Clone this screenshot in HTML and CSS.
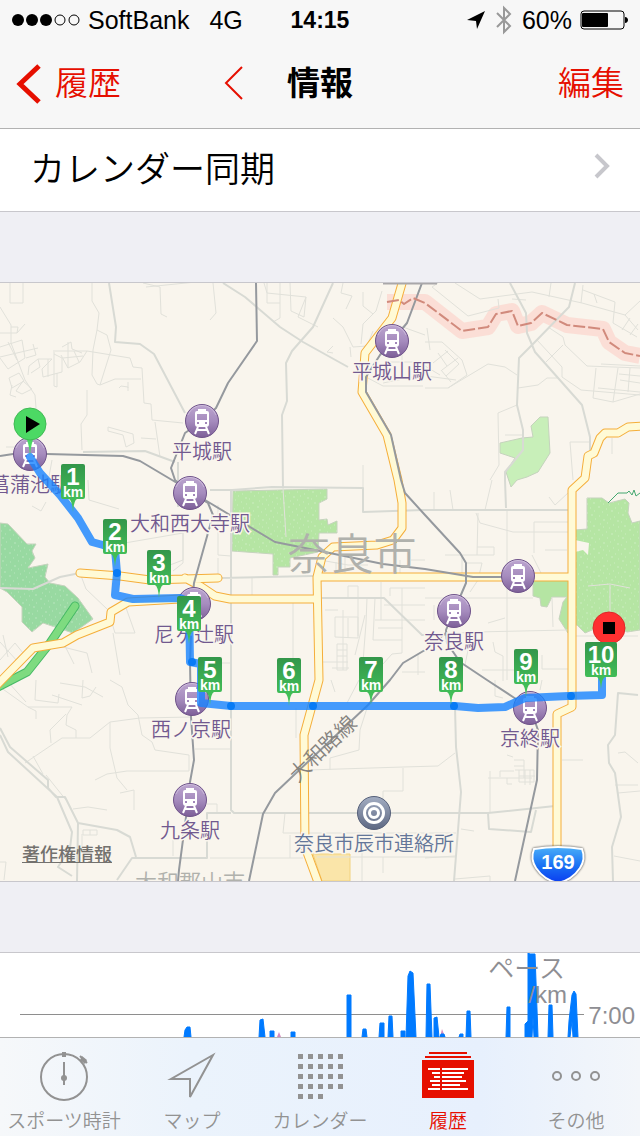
FILE: index.html
```html
<!DOCTYPE html>
<html lang="ja">

<head>
  <meta charset="UTF-8">
  <meta name="viewport" content="width=device-width, initial-scale=1.0">
  <title>情報</title>
  <link rel="stylesheet" href="styles.css">
</head>

<body>
  <header class="header">
    <div class="status-bar">
      <div class="status-left">
        <svg class="signal" width="68" height="12" viewBox="0 0 68 12" aria-hidden="true">
          <circle cx="6" cy="6" r="6" />
          <circle cx="20" cy="6" r="6" />
          <circle cx="34" cy="6" r="6" />
          <circle class="off" cx="48" cy="6" r="5" />
          <circle class="off" cx="62" cy="6" r="5" />
        </svg>
        <span class="carrier">SoftBank</span>
        <span class="network">4G</span>
      </div>
      <div class="clock">14:15</div>
      <div class="status-right">
        <svg width="20" height="20" viewBox="0 0 20 20" aria-hidden="true">
          <path d="M19 1 1 10l9 1 1 8z" />
        </svg>
        <svg class="bluetooth" width="16" height="26" viewBox="0 0 16 26" aria-hidden="true">
          <path d="M1 6l13 13-6 6V1l6 6L1 20" />
        </svg>
        <span class="percent">60%</span>
        <svg width="48" height="20" viewBox="0 0 48 20" aria-hidden="true">
          <rect class="battery-shell" x="1" y="1" width="43" height="18" rx="3" />
          <rect x="2" y="3" width="26" height="14" rx="1" />
          <path d="M45 7c4 0 4 6 0 6z" />
        </svg>
      </div>
    </div>
    <nav class="nav-bar">
      <div class="nav-left">
        <a class="back" href="#history">
          <svg width="26" height="40" viewBox="0 0 26 40" aria-hidden="true">
            <path d="M23 2 4 20l19 18" stroke-width="5" />
          </svg>
          履歴
        </a>
        <button class="previous" type="button" aria-label="前へ">
          <svg width="20" height="36" viewBox="0 0 20 36" aria-hidden="true">
            <path d="M18 1 2 17l16 16" stroke-width="2" />
          </svg>
        </button>
      </div>
      <h1>情報</h1>
      <button class="edit" type="button">編集</button>
    </nav>
  </header>

  <main class="content">
    <a class="row" href="#calendar-sync">
      カレンダー同期
      <svg width="18" height="26" viewBox="0 0 18 26" aria-hidden="true">
        <path d="M2 2l11 11L2 24" />
      </svg>
    </a>

    <section class="map">
      <svg class="map-canvas" viewBox="0 283 640 598" role="img" aria-label="マップ">
        <defs>
          <linearGradient id="station-fill" x1="0" y1="0" x2="0" y2="1">
            <stop offset="0" stop-color="#bca5cf" />
            <stop offset="0.5" stop-color="#a68cbe" />
            <stop offset="1" stop-color="#7d5f98" />
          </linearGradient>
          <linearGradient id="office-fill" x1="0" y1="0" x2="0" y2="1">
            <stop offset="0" stop-color="#a3adc2" />
            <stop offset="1" stop-color="#5d6883" />
          </linearGradient>
          <linearGradient id="km-fill" x1="0" y1="0" x2="0" y2="1">
            <stop offset="0" stop-color="#33964a" />
            <stop offset="1" stop-color="#46ca5c" />
          </linearGradient>
          <linearGradient id="shield-fill" x1="0" y1="0" x2="0" y2="1">
            <stop offset="0" stop-color="#4aaef8" />
            <stop offset="0.5" stop-color="#1b73f4" />
            <stop offset="1" stop-color="#0a3cf0" />
          </linearGradient>
          <pattern id="grass" width="31" height="23" patternUnits="userSpaceOnUse">
            <path d="M1 2h1M9 1h2M17 3h1M26 2h1M5 5h1M13 6h1M22 5h2M29 7h1M2 9h2M10 10h1M18 9h1M25 11h1M6 13h1M14 14h2M21 13h1M28 15h2M1 16h1M11 18h1M18 17h1M24 19h1M4 20h2M14 21h1M20 22h1M29 21h1" stroke="#fff" stroke-opacity="0.3" />
          </pattern>
          <symbol id="station" viewBox="-18 -18 36 36">
            <circle r="16.500" fill="url(#station-fill)" stroke="#6f538a" />
            <path d="M-14 -6a15 15 0 0 1 28 0" fill="none" stroke="#fff" stroke-opacity="0.3" />
            <path fill="#fff" fill-rule="evenodd"
              d="M-4 -12h8v2h1q2 0 2 2v11q0 3-3 3h-8q-3 0-3-3v-11q0-2 2-2h1zM-5 -7v6H5v-6zM-5 1v2h2v-2zM3 1v2h2v-2z" />
            <path d="M-4 6l-3 7M4 6l3 7M-5 9H5" stroke="#fff" stroke-width="2" />
          </symbol>
          <symbol id="km" viewBox="0 0 24 48">
            <path d="M2 0h20q2 0 2 2v31q0 2-2 2h-6q-3 1-4 13q-1-12-4-13H2q-2 0-2-2V2q0-2 2-2z" fill="url(#km-fill)" />
          </symbol>
        </defs>

        <rect class="land" y="283" width="640" height="598" />

        <g class="parks">
          <path class="forest" d="M0 523l8 1 19 20h9l-4 7 3 7-7 10 20-4-3 13 5 6 15 3 13 12 15 21-20 14-30-10-11 9-10-10v-15L7 592l-7-4z" />
          <path class="park" d="M233 491l94-2v10l-8 4v17l8-1 1 6 9-4v12h-18l-1 19-28 6v9h-12v8h-5v-21l-41-3z" />
          <path class="lawn" d="M540 417h8l2 36-12 19-11 5-10 3-6 7-5-15 9-14-15-5v-10l22-5 11-1-2-11z" />
          <path class="park" d="M587 498h15l7 5 16-4 4 4-1 10 4 10 8-2v109l-13 2-12-6-23 4-7 3-8-8h-5v-96l3 1 12-1z" />
          <path class="park" d="M533 580l37-2-2 55-9-14 4-17 4-5h-15l-5 10-6-1-1-8-7-2z" />
          <path class="grass" d="M0 523l8 1 19 20h9l-4 7 3 7-7 10 20-4-3 13 5 6 15 3 13 12 15 21-20 14-30-10-11 9-10-10v-15L7 592l-7-4zM233 491l94-2v10l-8 4v17l8-1 1 6 9-4v12h-18l-1 19-28 6v9h-12v8h-5v-21l-41-3zM587 498h15l7 5 16-4 4 4-1 10 4 10 8-2v109l-13 2-12-6-23 4-7 3-8-8h-5v-96l3 1 12-1z" />
          <path class="clearing" d="M575 540l14 3-1 12-5-5-8 2z" />
          <path class="plot" d="M313 854h37v27h-28z" />
          <path class="trail" d="M608 503l10-10h9l2-2 3 4 2-5 2 6 4-3" />
        </g>

        <path class="border-band" d="M387 302h38l37 29 26-4 8-13 16-3 6 15 13-3 11-10 25 12 36 4 6 13 16 11 15 3" />

        <path class="streets" d="M92 283v18l7 12-2 17 10 5 4 15-11 35-3-1-5-9 1-25 4-20M55 351h32l43 7 3 9 9 1 2 35 7 1 1 16 31 3M100 385l15-6h26M87 390v25l-6 9 1 26M10 283v20h13v-20M0 307l11 18v18l14 37 10 15 1 13M0 347l22-7 3 18-17 11-8-11M0 357l38-9M11 327h7l-1 6H0M17 333l8-9M8 342l9 18M33 344l3 11-10 3M28 375l1-9 9-7h14M31 373l9-6-2-8M54 350v36l3 1v-14M62 358v14l-19 5-1-8 10-10M48 359v18M54 354l8 4M61 355l7 13 12-6 7-11M68 342v26M62 347l9-5 1 7 10 4M63 358l20-2M74 351l5 11M9 378l10-5 5 8-12 7zM12 385l-2 10 6 2M16 391l7-10 9 8-10 5zM108 427l25 7 1 9-8 4-3-12-15-4zM119 388l2-2 7 1v4M128 382v6M141 438l15 1M155 422l5 35M6 447h15M52 460l-4 22" />
        <path class="streets" d="M143 283l17 4 1 27 6 3M146 287l50-5M213 283l3 30-6 7M264 283l3 10 39 4-2 20-13-6-1-28M267 283v20h13v-20M280 303v15l-7 4M306 297l-8 20 20 10M333 318l10 9 10 20 14-1 6-15M333 353l-6-1 6-6M343 283l-2 10 11 3-6 13M363 292v14l10 8M382 291l-6 20-13 13-2 20M350 347l1 10M366 377l17 9h40M383 383l40-8M402 355v20M389 362h36M400 326l25 9M363 465v23" />
        <path class="streets" d="M432 287l36 29 31-8-1-9M432 287l6-4M455 283l25 16 52-7 50 11 43 12 13 15M526 300l-14-1M551 283l-2 14M583 285l-2 18M583 290l32 12-2 21 24 14M597 303l-3-9M625 315l15-14M622 330l8-12M630 335l8-11M448 388l40-24 17 3 12 8M425 342h17l20 18 5 15-19 13h-23M427 328l3 22M433 363l15-12M442 370l16-12M446 376l13-12M438 353l9 13M445 350l14 14M441 370l10 12M426 376l30 4M425 366l15 9M518 388l20-3 9-7h10M537 340l25 27v10l19 13 59 5M548 327l15 10 2 8 22 21 53 2M546 362l17-17M596 368l-3 30 20 4 27-8M618 368l-5 34M601 364l39 2M619 374l21 2M620 380l20 3M598 388l42 4M630 368l-2 24M498 413l19-8M498 413l1 52-9 15M505 435h17M570 442h20M570 442l3 38M612 438v16" />
        <path class="streets" d="M67 480l8 4-4 9M88 480l1 20 30 9M46 502l-5 9-9-5M113 545l70-12V560l-13 5M183 533v30l-10 8M80 573l6 16 21 20M112 570v25M125 605l10 28h-20l-3-10M113 633l7 42M135 600l-12 5M0 642l18 20M0 660l15-17 8 10M3 635l5 22M47 643l40 10 5 20M64 644l10 20" />
        <path class="streets" d="M283 488l3 49M252 577v21M293 598v82M348 586h10v50M348 586v12M335 617h23v21l-23-1zM348 618v20M343 610v60M325 610h13M337 644h10v26h-10zM337 650h10M337 656h10M322 662h26M332 668h17M367 598l-1 25-4 52M375 598l-2 42h29M402 588v65l-10 1-9 10M375 620h50M381 582v38M390 588v8M390 588h35M384 605h41M378 628h25M320 560l28 5h20M400 560v15M336 562v12M345 555v20M411 560h14M418 655v20M402 672h23M355 655l10-40M218 505v50l13 1M218 558v20M210 663h21" />
        <path class="streets" d="M478 513l-1 42M480 523l33 9h55M480 523l-4-10M507 510v170M534 553v-31h34M445 555h49v-8h-17M492 480l-7 30M450 490l3 20M434 492v18M549 497l6 8 13-12M425 598h108M425 635l50-3 93-2M552 597l1 30M488 623l17-5M434 605v15M462 555v21M467 563h15l-4 17-8 12M532 555l12 24M470 640l-5 25M493 642l2 10 8 4v25M542 655v14h26M482 670h34M575 636h63M610 585v35M588 586l22-2 20 4M545 550h22" />
        <path class="streets" d="M25 763l37-25h28l20-16 30-4 52-1M110 722v26l7 30 10 12M95 780l12-6 20-3h62v-16l-34-5-3-8-10-7-4-20-10-10-6-18-12-7M0 687l28 20h44l-5 8-1 10 10 5v8M66 714l-16 16 1 13M36 680l-1 20 23 3 1-9M28 707l8 4v8M52 695l30 10M8 682l18 20M60 683l25 4 18 10M83 680l-1 18 8-2 6-9M73 809l15-2 19 3M120 793l14-3v20M83 830h14v5H83zM90 830v5M82 850v-16M0 862h6l-2 18M195 749h36M173 840v16M66 800l-20-25M33 756l10 18" />
        <path class="streets" d="M308 770l95-3 35-1 17-13M403 768v23h-20v22M368 705l-8 25-1 20-29 8v12M285 813l-2 20h173M290 835v23M210 858h93M317 857h138M362 837v44M383 857v16M296 708v30M331 680l4 12M359 680l-12 23M207 804h10v10M490 771v42M488 778h44M514 760h10v18M514 766h10M519 770v12h15v-12h-19M525 770v15M530 770v15M519 776h16M507 778v6h5M500 777v-6h14M507 755l6 2M562 760h21M618 753l7-1 13 11M618 793l22-2M615 785h23M461 829l13 2M425 858l30-2M455 879l35-3v5M614 856l26 5M542 680l-2 10M495 680v16l8 2" />

        <path class="roads" d="M109 283l7 44-1 15 25 2 14 10 31 59M83 452l62-1 30 11M178 462v45M223 283l22 14 35 30 23 15 45 25M333 283l-20 44-21 24-6 12 1 38-5 14 1 73M510 283l16 30 1 20 8 19 47 53 8 32v13M575 283l-6 24-37 38-13 13-2 47 6 25v20l-18 22v8l1 28M210 490h22l40-3 91 1v24l60-2h145M231 490v320l3 3h254l67-7M231 813h-24v45h-75l-15 22M220 578l93-2M322 598h62l38 37h27" />
        <path class="roads" d="M0 588l33 1 27-12 20-4" />
        <path class="roads" d="M0 728l10 19 38 33v8l8 9h9l13 26-1 58M0 735l8 17 49 45 15 35-2 16-12 19 14 9M78 823l39 7 13 7 6 20M455 707l1 40 5 45-7 89M638 695l-20-2-3 42-7 10 1 18 6 10 6 44-9 30 1 34M488 813l1 16 42 3 5-22" />

        <g class="highways">
          <path class="green-casing" d="M75 606l-25 37-23 29-31 16" />
          <path class="green-fill" d="M75 606l-25 37-23 29-31 16" />
          <path class="casing" d="M403 280l-11 38-27 35-3 39 25 43 11 45 4 23v25l-9 12-16 5-44 2-11 10-5 20 2 103-15 55 1 112 14 38M317 577h253M644 426l-16 1-10 6h-13l-5 5-6 15-6 3-3 22-13 12v217l-15 7v137M80 573l40 3 30 4 68-2M185 578l15 8 15 10 15 3h87M180 599l-52 3-17 10-1 10-33 13-14 8-30 5-37 38" />
          <path class="fill" d="M403 280l-11 38-27 35-3 39 25 43 11 45 4 23v25l-9 12-16 5-44 2-11 10-5 20 2 103-15 55 1 112 14 38M317 577h253M644 426l-16 1-10 6h-13l-5 5-6 15-6 3-3 22-13 12v217l-15 7v137M80 573l40 3 30 4 68-2M185 578l15 8 15 10 15 3h87M180 599l-52 3-17 10-1 10-33 13-14 8-30 5-37 38" />
        </g>

        <path class="rails" d="M0 456l13-2 34 0 76 2 17 5 32 19 38 23 20 12 45 27 45 9 63 13 42 5 48 8h29M256 283l1 58-29 42-12 25-14 13-17 12-14 35 4 12 15 13 18 10 5 12-19 68-2 21-2 59 1 54 3 43-4 22-2 18-2 17-7 53-1 11M422 283l-15 40-27 32-14 22v15l25 43 10 45 4 13 20 22 35 38 6 10v20l-6 14-6 13-8 20 1 13 13 19 27 18 26 17 17 11 8 22-1 50-22 101" />
        <path class="rails" d="M447 632l-22 18-22 13-13 17-22 25-93 88-12 21-14 67" />
        <path class="border-line" d="M387 302l12-2 5 4 9-6 12 5 37 28 26-4 8-13 16-3 6 15 13-3 11-10 25 12 36 4 6 13 16 11 15 3" />
        <path class="clipped-label" d="M383 283h54" />

        <g class="city-labels">
          <text class="city" x="352" y="570">奈良市</text>
          <text class="town" x="190" y="890">大和郡山市</text>
          <text class="line-name" transform="rotate(-44 323 749)" x="323" y="756">大和路線</text>
        </g>

        <g class="stations">
          <use href="#station" x="374" y="323" width="36" height="36" />
          <use href="#station" x="184" y="403" width="36" height="36" />
          <use href="#station" x="12" y="436" width="36" height="36" />
          <use href="#station" x="172" y="475" width="36" height="36" />
          <use href="#station" x="176" y="586" width="36" height="36" />
          <use href="#station" x="500" y="558" width="36" height="36" />
          <use href="#station" x="436" y="593" width="36" height="36" />
          <use href="#station" x="174" y="681" width="36" height="36" />
          <use href="#station" x="512" y="690" width="36" height="36" />
          <use href="#station" x="172" y="782" width="36" height="36" />
          <text x="392" y="379">平城山駅</text>
          <text x="202" y="459">平城駅</text>
          <text x="30" y="492">菖蒲池駅</text>
          <text x="190" y="531">大和西大寺駅</text>
          <text x="194" y="642">尼ヶ辻駅</text>
          <text x="454" y="649">奈良駅</text>
          <text x="191" y="737">西ノ京駅</text>
          <text x="530" y="746">京終駅</text>
          <text x="190" y="838">九条駅</text>
        </g>

        <g class="office">
          <circle cx="374" cy="813" r="16.500" fill="url(#office-fill)" stroke="#566079" />
          <circle class="ring" cx="374" cy="813" r="9.500" />
          <circle class="ring" cx="374" cy="813" r="4.500" />
          <text x="374" y="851">奈良市辰市連絡所</text>
        </g>

        <g class="route-sign">
          <path d="M534 849q24-4 48 0 4 10-2 19-8 12-22 15-14-3-22-15-6-9-2-19z" fill="url(#shield-fill)" />
          <text x="558" y="869">169</text>
        </g>

        <path class="route" d="M30 457l10 16 20 22 18 23 14 24 11 3 12 4 2 24-2 22 18 4 47-1 9 4 1 60 11 2v39l30 3h224l23 2 27-1 20-9 43-2 34-1v-20" />
        <g class="route-points">
          <circle cx="117" cy="573" r="4" />
          <circle cx="192" cy="662" r="4" />
          <circle cx="231" cy="706" r="4" />
          <circle cx="313" cy="706" r="4" />
          <circle cx="454" cy="706" r="4" />
          <circle cx="571" cy="696" r="4" />
        </g>

        <g class="start">
          <path d="M25 436q4 6 5 20 1-14 5-20z" />
          <circle cx="30" cy="424" r="16" />
          <path class="symbol" d="M26 416l14 8-14 9z" />
        </g>
        <g class="finish">
          <circle cx="609" cy="628" r="16" />
          <path class="symbol" d="M603 622h12v12h-12z" />
        </g>

        <g class="km-markers">
          <use href="#km" x="61" y="464" width="24" height="48" />
          <text class="number" x="73" y="485">1</text>
          <text x="73" y="497">km</text>
          <use href="#km" x="103" y="519" width="24" height="48" />
          <text class="number" x="115" y="540">2</text>
          <text x="115" y="552">km</text>
          <use href="#km" x="147" y="550" width="24" height="48" />
          <text class="number" x="159" y="571">3</text>
          <text x="159" y="583">km</text>
          <use href="#km" x="177" y="596" width="24" height="48" />
          <text class="number" x="189" y="617">4</text>
          <text x="189" y="629">km</text>
          <use href="#km" x="198" y="657" width="24" height="48" />
          <text class="number" x="210" y="678">5</text>
          <text x="210" y="690">km</text>
          <use href="#km" x="277" y="658" width="24" height="48" />
          <text class="number" x="289" y="679">6</text>
          <text x="289" y="691">km</text>
          <use href="#km" x="359" y="657" width="24" height="48" />
          <text class="number" x="371" y="678">7</text>
          <text x="371" y="690">km</text>
          <use href="#km" x="439" y="657" width="24" height="48" />
          <text class="number" x="451" y="678">8</text>
          <text x="451" y="690">km</text>
          <use href="#km" x="514" y="649" width="24" height="48" />
          <text class="number" x="526" y="670">9</text>
          <text x="526" y="682">km</text>
          <path d="M587 642h28q2 0 2 2v31q0 2-2 2h-10q-3 1-4 12q-1-11-4-12h-10q-2 0-2-2v-31q0-2 2-2z" fill="url(#km-fill)" />
          <text class="number" x="601" y="663">10</text>
          <text x="601" y="675">km</text>
        </g>
      </svg>
      <a class="legal" href="#legal">著作権情報</a>
    </section>

    <section class="chart">
      <svg class="chart-canvas" viewBox="0 0 640 84" role="img" aria-label="ペース /km">
        <path class="axis" d="M20 61.500h564" />
        <path class="accent" d="M277 84l2-5 2 5zM440 84l2-8 3 8z" />
        <path class="bars" d="M184 84l1-7 2-3h3l1 10zM259 84l1-17 3-1 2 18zM270 84v-6h4v6zM291 84v-5h4v5zM347 84V42h4v42zM362 84l1-8h3l1 8zM379 84l1-14h4v14zM388 84l1-21h3l1 21zM401 84v-6h4v6zM406 84l2-61 2-5 3 2 3 64zM426 84l1-53h3l2 53zM434 84V65l3-1 2 20zM440 84l1-3h3l1 3zM459 84l1-3h3v3zM466 84l1-26h3l1 26zM506 84l1-30h3v30zM525 84v-13l3-3V0l2 1h5l3 83h-4l-1-20-1 20zM548 84l1-32h3l1 32zM568 84l1-16 3-26 2-4 2 3 2 43h-5l-1-16-2 16z" />
        <text class="chart-title" x="565" y="25">ペース</text>
        <text class="chart-unit" x="567" y="50">/km</text>
        <text class="chart-tick" x="635" y="71">7:00</text>
      </svg>
    </section>
  </main>

  <nav class="tab-bar">
    <a class="tab" href="#stopwatch">
      <svg width="56" height="48" viewBox="0 0 56 48" aria-hidden="true">
        <circle class="line" cx="28" cy="25" r="23" />
        <path class="line" d="M28 10v23M44 4l7 7" />
        <path d="M26 0h4v5h-4zM46 4l5 4-2 4-5-4z" />
        <circle cx="28" cy="26" r="3" />
      </svg>
      スポーツ時計
    </a>
    <a class="tab" href="#map">
      <svg width="56" height="48" viewBox="0 0 56 48" aria-hidden="true">
        <path class="line" d="M49 3 7 27h19v18z" />
      </svg>
      マップ
    </a>
    <a class="tab" href="#calendar">
      <svg width="56" height="48" viewBox="0 0 56 48" aria-hidden="true">
        <path d="M6 2h5v5H6zM16 2h5v5h-5zM26 2h5v5h-5zM36 2h5v5h-5zM46 2h5v5h-5zM6 12h5v5H6zM16 12h5v5h-5zM26 12h5v5h-5zM36 12h5v5h-5zM46 12h5v5h-5zM6 22h5v5H6zM16 22h5v5h-5zM26 22h5v5h-5zM36 22h5v5h-5zM46 22h5v5h-5zM6 32h5v5H6zM16 32h5v5h-5zM26 32h5v5h-5zM36 32h5v5h-5zM46 32h5v5h-5zM6 42h5v5H6zM16 42h5v5h-5zM26 42h5v5h-5z" />
      </svg>
      カレンダー
    </a>
    <a class="tab active" href="#history" aria-current="page">
      <svg width="56" height="48" viewBox="0 0 56 48" aria-hidden="true">
        <path d="M9 0h38v2H9zM5 4h46v2H5zM2 8h52v38H2z" />
        <path class="cutout" d="M8 17h12M22 17h26M12 21h8M22 21h22M14 25h6M22 25h20M10 29h10M22 29h24M12 33h8M22 33h18M8 37h12M22 37h26" />
      </svg>
      履歴
    </a>
    <a class="tab" href="#more">
      <svg width="56" height="48" viewBox="0 0 56 48" aria-hidden="true">
        <circle class="line" cx="9" cy="24" r="4" />
        <circle class="line" cx="28" cy="24" r="4" />
        <circle class="line" cx="47" cy="24" r="4" />
      </svg>
      その他
    </a>
  </nav>
</body>

</html>
```

FILE: styles.css
```css
* {
  margin: 0;
  padding: 0;
  box-sizing: border-box;
}

body {
  display: flex;
  flex-direction: column;
  height: 100vh;
  overflow: hidden;
  font-family: "Liberation Sans", "Noto Sans CJK JP", sans-serif;
  font-weight: 350;
  background-color: #efeff4;
  color: #000;
}

a {
  color: inherit;
  text-decoration: none;
}

button {
  border: none;
  background: none;
  color: inherit;
  font: inherit;
  cursor: pointer;
}

svg {
  display: block;
  flex-shrink: 0;
  overflow: visible;
}

.header {
  background-color: #f7f7f7;
  border-bottom: 1px solid #b2b2b2;
}

/* Status bar */
.status-bar {
  display: grid;
  grid-template-columns: 1fr auto 1fr;
  align-items: center;
  height: 40px;
  padding: 0 12px;
  font-size: 25px;
}

.status-left,
.status-right {
  display: flex;
  align-items: center;
  gap: 8px;
}

.status-right {
  justify-content: flex-end;
}

.network {
  margin-left: 12px;
}

.signal .off {
  fill: none;
  stroke: #000;
}

.clock {
  font-size: 23px;
  font-weight: 700;
}

.bluetooth {
  fill: none;
  stroke: #999;
  stroke-width: 2;
  margin: 0 2px;
}

.battery-shell {
  fill: none;
  stroke: #000;
}

/* Navigation */
.nav-bar {
  display: grid;
  grid-template-columns: 1fr auto 1fr;
  align-items: center;
  height: 88px;
  padding: 0 16px;
  font-size: 33px;
  line-height: 44px;
  color: #e60f00;
}

.nav-bar path {
  fill: none;
  stroke: #e60f00;
}

.nav-left,
.back {
  display: flex;
  align-items: center;
}

.nav-left {
  justify-content: space-between;
  padding-right: 43px;
}

.back {
  gap: 13px;
}

.nav-bar h1 {
  font-size: 33px;
  font-weight: 700;
  color: #000;
}

.edit {
  justify-self: end;
}

/* Content */
.content {
  flex: 1;
  min-height: 0;
  overflow: hidden;
}

.row {
  display: flex;
  align-items: center;
  justify-content: space-between;
  height: 83px;
  padding: 0 28px 8px 30px;
  border-bottom: 1px solid #c8c7cc;
  background-color: #fff;
  font-size: 35px;
}

.row path {
  fill: none;
  stroke: #c7c7cc;
  stroke-width: 4;
}

.map {
  position: relative;
  margin: 70px 0;
  border-top: 1px solid #c8c7cc;
  border-bottom: 1px solid #c8c7cc;
}

.map-canvas,
.chart-canvas {
  width: 100%;
  overflow: hidden;
}

.legal {
  position: absolute;
  left: 22px;
  bottom: 14px;
  font-size: 18px;
  line-height: 24px;
  font-weight: 500;
  color: #73716e;
  text-decoration: underline;
}

/* Map layers */
.land,
.clearing {
  fill: #f9f5ed;
}

.forest {
  fill: #98d9a1;
}

.park {
  fill: #b5e5a3;
}

.lawn {
  fill: #c8efb9;
}

.forest,
.park,
.lawn {
  stroke: #c5d3bd;
}

.grass {
  fill: url(#grass);
}

.plot {
  fill: #fae5a9;
  stroke: #f2d27e;
}

.trail {
  fill: none;
  stroke: #45a870;
}

.streets,
.roads,
.rails,
.route,
.casing,
.fill,
.green-casing,
.green-fill,
.border-band,
.border-line {
  fill: none;
  stroke-linejoin: round;
}

.streets {
  stroke: #e1e1da;
}

.roads {
  stroke: #d8dad4;
  stroke-width: 2;
}

.rails {
  stroke: #95999e;
  stroke-width: 2;
}

.casing,
.fill,
.green-casing,
.green-fill {
  stroke-linecap: round;
}

.casing {
  stroke: #f5ae3a;
  stroke-width: 9;
}

.fill {
  stroke: #fffad6;
  stroke-width: 7;
}

.green-casing {
  stroke: #46b965;
  stroke-width: 9;
}

.green-fill {
  stroke: #7edb80;
  stroke-width: 7;
}

.border-band {
  stroke: #fbd8cf;
  stroke-opacity: 0.8;
  stroke-width: 16;
}

.border-line {
  stroke: #d18a7c;
  stroke-width: 2;
  stroke-dasharray: 12 3;
}

.clipped-label {
  stroke: #a9a7a9;
  stroke-width: 3;
}

.map-canvas text {
  text-anchor: middle;
  font-size: 20px;
}

.city-labels {
  fill: #b0b1ac;
}

.city-labels .city {
  font-size: 43px;
}

.city-labels .town {
  font-size: 22px;
}

.city-labels .line-name {
  font-size: 21px;
  fill: #85837f;
}

.stations text,
.office text {
  stroke: #f9f5ed;
  stroke-width: 3;
  paint-order: stroke;
}

.stations text {
  fill: #71598f;
}

.office text {
  fill: #637699;
}

.ring {
  fill: none;
  stroke: #fff;
  stroke-width: 3;
}

.route-sign path {
  stroke: #fff;
  stroke-width: 2;
  filter: drop-shadow(0 0 1px #333);
}

.map-canvas .route-sign text {
  font-size: 20px;
  font-weight: 700;
  fill: #fff;
}

.route {
  stroke: #1683ff;
  stroke-opacity: 0.8;
  stroke-width: 8;
  stroke-linecap: round;
}

.route-points {
  fill: #087bf5;
}

.start {
  fill: #4cd964;
}

.finish {
  fill: #ff3030;
}

.start circle {
  stroke: #41b955;
}

.finish circle {
  stroke: #dd2929;
}

.symbol {
  fill: #000;
}

.km-markers {
  font-weight: 700;
}

.map-canvas .km-markers text {
  font-size: 14px;
  fill: #fff;
}

.map-canvas .km-markers .number {
  font-size: 24px;
}

/* Pace chart */
.chart {
  border-top: 1px solid #c8c7cc;
  background-color: #fff;
}

.axis {
  stroke: #8e8e8e;
}

.accent {
  fill: #d68bc0;
}

.bars {
  fill: #007aff;
  stroke: #007aff;
  stroke-linejoin: round;
}

.chart-canvas text {
  text-anchor: end;
  font-size: 24px;
  fill: #8e8e93;
}

.chart-canvas .chart-title {
  font-size: 26px;
}

/* Tab bar */
.tab-bar {
  display: grid;
  grid-template-columns: repeat(5, 1fr);
  height: 99px;
  border-top: 1px solid #b2b2b2;
  background: linear-gradient(90deg, #f6f8fa, #ebf3fc 30%, #e7f0fd 75%, #f3f6fa);
}

.tab {
  display: flex;
  flex-direction: column;
  align-items: center;
  gap: 10px;
  padding-top: 14px;
  font-size: 19px;
  line-height: 24px;
  color: #929292;
  white-space: nowrap;
}

.tab svg {
  fill: #929292;
}

.tab .line {
  fill: none;
  stroke: #929292;
  stroke-width: 2;
}

.tab.active {
  color: #e60f00;
}

.tab.active svg {
  fill: #e60f00;
}

.tab .cutout {
  stroke: #fff;
  stroke-width: 2;
}
```
